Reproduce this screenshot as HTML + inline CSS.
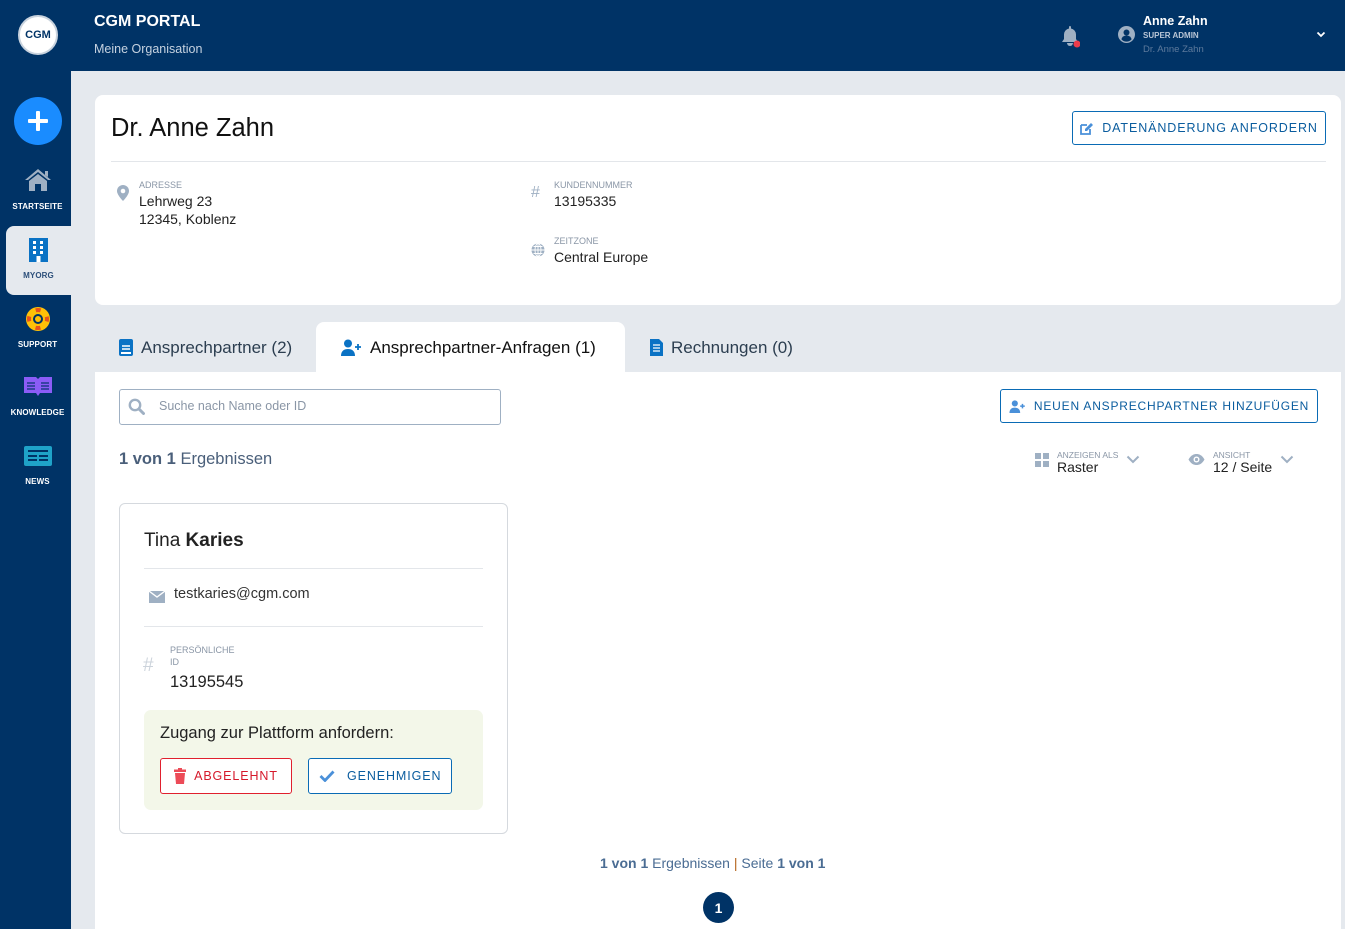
<!DOCTYPE html>
<html><head><meta charset="utf-8"><style>
*{box-sizing:border-box;margin:0;padding:0}
body{width:1345px;height:929px;overflow:hidden;background:#e5e9ee;font-family:"Liberation Sans",sans-serif;position:relative;color:#222}
.hdr{position:absolute;left:0;top:0;width:1345px;height:71px;background:#003366}
.side{position:absolute;left:0;top:0;width:71px;height:929px;background:#003366}
.abs{position:absolute;white-space:nowrap}
.navlbl{position:absolute;width:71px;text-align:center;font-size:8px;font-weight:bold;color:#fff;letter-spacing:.1px}
.card{position:absolute;left:95px;top:95px;width:1246px;height:210px;background:#fff;border-radius:8px}
.lbl{font-size:9px;color:#8a96a6;text-transform:uppercase}
.val{font-size:14px;color:#222;line-height:18px}
.btn{position:absolute;white-space:nowrap;border:1px solid #0a6bb5;border-radius:3px;color:#0a5c9e;font-size:12.5px;letter-spacing:.9px;display:flex;align-items:center;justify-content:center;gap:8px;background:#fff}
.tab{position:absolute;top:322px;height:51px;font-size:17px;display:flex;align-items:center;gap:8px;color:#2c3e50;white-space:nowrap}
</style></head><body>
<div class="hdr"></div>
<div class="side"></div>
<div class="abs" style="left:18px;top:15px;width:40px;height:40px;border-radius:50%;background:#fff;border:2px solid #c9d3de;display:flex;align-items:center;justify-content:center;font-size:11px;font-weight:bold;color:#003366">CGM</div>
<div class="abs" style="left:94px;top:13px;color:#fff;font-size:16px;font-weight:bold">CGM PORTAL</div>
<div class="abs" style="left:94px;top:42px;color:#c5d2e0;font-size:12.5px">Meine Organisation</div>
<svg class="abs" style="left:1060px;top:26px" width="20" height="22" viewBox="0 0 20 22"><path d="M9 1a1 1 0 0 1 2 0v1.5a6 6 0 0 1 5 6V13l2 3H2l2-3V8.5a6 6 0 0 1 5-6z" fill="#9fb0c3"/><path d="M7 17h6a3 3 0 0 1-6 0z" fill="#9fb0c3"/><circle cx="17" cy="18" r="3.5" fill="#ec3b4b"/></svg>
<svg class="abs" style="left:1118px;top:26px" width="17" height="17" viewBox="0 0 17 17"><circle cx="8.5" cy="8.5" r="8.5" fill="#9fb0c3"/><circle cx="8.5" cy="6.5" r="3" fill="#003366"/><path d="M3.5 13.5a5 4 0 0 1 10 0a7 7 0 0 1-10 0z" fill="#003366"/></svg>
<div class="abs" style="left:1143px;top:14px;color:#fff;font-size:12.5px;font-weight:bold">Anne Zahn</div>
<div class="abs" style="left:1143px;top:31px;color:#b9c6d6;font-size:8px;font-weight:bold">SUPER ADMIN</div>
<div class="abs" style="left:1143px;top:44px;color:#5d7a9c;font-size:9.5px">Dr. Anne Zahn</div>
<svg class="abs" style="left:1316px;top:31px" width="10" height="7" viewBox="0 0 10 7"><path d="M1.5 1.5l3.5 3.5 3.5-3.5" stroke="#fff" stroke-width="1.8" fill="none"/></svg>
<div class="abs" style="left:14px;top:97px;width:48px;height:48px;border-radius:50%;background:#1a8cff"></div>
<div class="abs" style="left:28px;top:119px;width:20px;height:4px;background:#fff;border-radius:1px"></div>
<div class="abs" style="left:36px;top:111px;width:4px;height:20px;background:#fff;border-radius:1px"></div>
<svg class="abs" style="left:24px;top:168px" width="28" height="24" viewBox="0 0 28 24"><path d="M14 1L1 12h3l10-8 10 8h3z" fill="#9fb0c3"/><path d="M21 3h3v6l-3-2z" fill="#9fb0c3"/><path d="M5 13l9-7 9 7v10h-6v-7h-6v7H5z" fill="#9fb0c3"/></svg>
<div class="navlbl" style="left:2px;top:202px">STARTSEITE</div>
<div class="abs" style="left:6px;top:226px;width:65px;height:69px;background:#e5e9ee;border-radius:8px 0 0 8px"></div>
<svg class="abs" style="left:28px;top:238px" width="21" height="24" viewBox="0 0 21 24"><rect x="1" y="0" width="19" height="24" fill="#0a72c4"/><g fill="#fff"><rect x="5" y="3" width="3" height="3"/><rect x="12" y="3" width="3" height="3"/><rect x="5" y="8" width="3" height="3"/><rect x="12" y="8" width="3" height="3"/><rect x="5" y="13" width="3" height="3"/><rect x="12" y="13" width="3" height="3"/><rect x="8.5" y="18" width="4" height="6"/></g></svg>
<div class="navlbl" style="left:3px;top:271px;color:#2c4f7a">MYORG</div>
<svg class="abs" style="left:26px;top:307px" width="24" height="24" viewBox="0 0 24 24"><circle cx="12" cy="12" r="12" fill="#ffc107"/><circle cx="12" cy="12" r="5" fill="#003366"/><circle cx="12" cy="12" r="9" fill="none" stroke="#e8531c" stroke-width="4" stroke-dasharray="5 9.1" stroke-dashoffset="2.5"/><circle cx="12" cy="12" r="3" fill="#ffc107"/></svg>
<div class="navlbl" style="left:2px;top:340px">SUPPORT</div>
<svg class="abs" style="left:24px;top:376px" width="28" height="22" viewBox="0 0 28 22"><path d="M0 1h12l2 2 2-2h12v16H16l-2 3-2-3H0z" fill="#8b5cf6"/><g stroke="#1e3a8a" stroke-width="1.6"><path d="M3 7h8M3 10h8M3 13h8M17 7h8M17 10h8M17 13h8"/></g></svg>
<div class="navlbl" style="left:2px;top:408px">KNOWLEDGE</div>
<svg class="abs" style="left:24px;top:446px" width="28" height="20" viewBox="0 0 28 20"><rect width="28" height="20" rx="2" fill="#1fa3c8"/><g fill="#003366"><rect x="4" y="4" width="20" height="2"/><rect x="4" y="9" width="9" height="2"/><rect x="15" y="9" width="9" height="2"/><rect x="4" y="13" width="9" height="2"/><rect x="15" y="13" width="9" height="2"/></g></svg>
<div class="navlbl" style="left:2px;top:477px">NEWS</div>
<div class="card"></div>
<div class="abs" style="left:111px;top:114px;font-size:25.5px;color:#111">Dr. Anne Zahn</div>
<div class="btn" style="left:1072px;top:111px;width:254px;height:34px"><svg width="14" height="13" viewBox="0 0 14 13"><path d="M1 3h6M1 3v9h9V7" stroke="#4a90d9" stroke-width="1.8" fill="none"/><path d="M11 1l2 2-6 6H5V7z" fill="#4a90d9"/></svg>DATENÄNDERUNG ANFORDERN</div>
<div class="abs" style="left:111px;top:161px;width:1215px;height:1px;background:#e3e6ea"></div>
<svg class="abs" style="left:117px;top:185px" width="12" height="16" viewBox="0 0 12 16"><path d="M6 0a6 6 0 0 1 6 6c0 4-6 10-6 10S0 10 0 6a6 6 0 0 1 6-6z" fill="#9fb0c3"/><circle cx="6" cy="6" r="2.3" fill="#fff"/></svg>
<div class="abs lbl" style="left:139px;top:180px">Adresse</div>
<div class="abs val" style="left:139px;top:192px">Lehrweg 23<br>12345, Koblenz</div>
<div class="abs" style="left:531px;top:184px;font-size:16px;color:#9fb0c3">#</div>
<div class="abs lbl" style="left:554px;top:180px">Kundennummer</div>
<div class="abs val" style="left:554px;top:192px">13195335</div>
<svg class="abs" style="left:531px;top:243px" width="14" height="14" viewBox="0 0 14 14"><circle cx="7" cy="7" r="6.5" fill="#9fb0c3"/><path d="M0.5 7h13M7 0.5v13M2.5 3.5h9M2.5 10.5h9" stroke="#fff" stroke-width=".9"/><ellipse cx="7" cy="7" rx="3" ry="6.5" fill="none" stroke="#fff" stroke-width=".9"/></svg>
<div class="abs lbl" style="left:554px;top:236px">Zeitzone</div>
<div class="abs val" style="left:554px;top:248px">Central Europe</div>
<div class="abs" style="left:316px;top:322px;width:309px;height:60px;background:#fff;border-radius:8px 8px 0 0"></div>
<div class="tab" style="left:119px"><svg width="14" height="17" viewBox="0 0 14 17"><rect width="14" height="17" rx="2" fill="#0a72c4"/><path d="M3 7h8M3 10h8" stroke="#fff" stroke-width="1.4"/><rect x="2" y="13" width="10" height="2" fill="#fff"/></svg>Ansprechpartner (2)</div>
<div class="tab" style="left:341px;color:#111"><svg width="21" height="17" viewBox="0 0 21 17"><circle cx="7" cy="4.5" r="4" fill="#0a72c4"/><path d="M0 17c0-5 3-7 7-7s7 2 7 7z" fill="#0a72c4"/><path d="M14 8h6M17 5v6" stroke="#0a72c4" stroke-width="1.8"/></svg>Ansprechpartner-Anfragen (1)</div>
<div class="tab" style="left:650px"><svg width="13" height="17" viewBox="0 0 13 17"><path d="M0 0h9l4 4v13H0z" fill="#0a72c4"/><path d="M3 6h7M3 9h7M3 12h7" stroke="#fff" stroke-width="1.3"/></svg>Rechnungen (0)</div>
<div class="abs" style="left:95px;top:372px;width:1246px;height:557px;background:#fff"></div>
<div class="abs" style="left:119px;top:389px;width:382px;height:36px;border:1px solid #9fb0c3;border-radius:3px"></div>
<svg class="abs" style="left:128px;top:398px" width="17" height="17" viewBox="0 0 17 17"><circle cx="7" cy="7" r="5.2" stroke="#9fb0c3" stroke-width="2.4" fill="none"/><path d="M11 11l4.5 4.5" stroke="#9fb0c3" stroke-width="3" stroke-linecap="round"/></svg>
<div class="abs" style="left:159px;top:399px;font-size:12.5px;color:#8a96a6">Suche nach Name oder ID</div>
<div class="btn" style="left:1000px;top:389px;width:318px;height:34px;font-size:12px;letter-spacing:.8px"><svg width="17" height="13" viewBox="0 0 21 17"><circle cx="7" cy="4.5" r="4" fill="#4a90d9"/><path d="M0 17c0-5 3-7 7-7s7 2 7 7z" fill="#4a90d9"/><path d="M14 8h6M17 5v6" stroke="#4a90d9" stroke-width="2"/></svg>NEUEN ANSPRECHPARTNER HINZUFÜGEN</div>
<div class="abs" style="left:119px;top:450px;font-size:16.5px;color:#4a5f7a"><b>1 von 1</b> Ergebnissen</div>
<svg class="abs" style="left:1035px;top:453px" width="14" height="14" viewBox="0 0 14 14"><g fill="#9fb0c3"><rect width="6" height="6"/><rect x="8" width="6" height="6"/><rect y="8" width="6" height="6"/><rect x="8" y="8" width="6" height="6"/></g></svg>
<div class="abs lbl" style="left:1057px;top:450px;font-size:8.5px">Anzeigen als</div>
<div class="abs" style="left:1057px;top:459px;font-size:14px">Raster</div>
<svg class="abs" style="left:1126px;top:455px" width="14" height="9" viewBox="0 0 14 9"><path d="M1.5 1.5l5.5 5.5 5.5-5.5" stroke="#9fb0c3" stroke-width="2" fill="none"/></svg>
<svg class="abs" style="left:1188px;top:454px" width="17" height="11" viewBox="0 0 17 11"><path d="M0.5 5.5C3 1 6 0 8.5 0S14 1 16.5 5.5C14 10 11 11 8.5 11S3 10 .5 5.5z" fill="#9fb0c3"/><circle cx="8.5" cy="5.5" r="3" fill="#fff"/><circle cx="8.5" cy="5.5" r="1.6" fill="#9fb0c3"/></svg>
<div class="abs lbl" style="left:1213px;top:450px;font-size:8.5px">Ansicht</div>
<div class="abs" style="left:1213px;top:459px;font-size:14px">12 / Seite</div>
<svg class="abs" style="left:1280px;top:455px" width="14" height="9" viewBox="0 0 14 9"><path d="M1.5 1.5l5.5 5.5 5.5-5.5" stroke="#9fb0c3" stroke-width="2" fill="none"/></svg>
<div class="abs" style="left:119px;top:503px;width:389px;height:331px;border:1px solid #d5d9de;border-radius:6px"></div>
<div class="abs" style="left:144px;top:530px;font-size:19px;color:#222">Tina <b>Karies</b></div>
<div class="abs" style="left:144px;top:568px;width:339px;height:1px;background:#e3e6ea"></div>
<svg class="abs" style="left:149px;top:590px" width="16" height="13" viewBox="0 0 16 13"><rect y="1" width="16" height="12" fill="#9fb0c3"/><path d="M0 1l8 6 8-6" stroke="#fff" stroke-width="1.3" fill="none"/></svg>
<div class="abs" style="left:174px;top:586px;font-size:14.5px;color:#333">testkaries@cgm.com</div>
<div class="abs" style="left:144px;top:626px;width:339px;height:1px;background:#e3e6ea"></div>
<div class="abs lbl" style="left:170px;top:644px;line-height:12px">Persönliche<br>ID</div>
<div class="abs" style="left:143px;top:655px;font-size:19px;color:#ccd3db">#</div>
<div class="abs" style="left:170px;top:673px;font-size:16.5px;color:#222">13195545</div>
<div class="abs" style="left:144px;top:710px;width:339px;height:100px;background:#f3f7e9;border-radius:7px"></div>
<div class="abs" style="left:160px;top:724px;font-size:16.5px;color:#222">Zugang zur Plattform anfordern:</div>
<div class="btn" style="left:160px;top:758px;width:132px;height:36px;border-color:#e0202e;color:#d6192b"><svg width="12" height="16" viewBox="0 0 12 16"><rect x="0" y="1.5" width="12" height="2.5" fill="#ec4b57"/><rect x="4" y="0" width="4" height="2" fill="#ec4b57"/><path d="M1 5h10l-1 11H2z" fill="#ec4b57"/></svg>ABGELEHNT</div>
<div class="btn" style="left:308px;top:758px;width:144px;height:36px"><svg width="16" height="12" viewBox="0 0 16 12"><path d="M1.5 6l4.5 4.5L14.5 1.5" stroke="#4a90d9" stroke-width="2.8" fill="none"/></svg>&nbsp;GENEHMIGEN</div>
<div class="abs" style="left:600px;top:855px;font-size:14px;color:#4a6c93"><b>1 von 1</b> Ergebnissen <span style="color:#b5651d">|</span> Seite <b>1 von 1</b></div>
<div class="abs" style="left:703px;top:892px;width:31px;height:31px;border-radius:50%;background:#003366;color:#fff;font-weight:bold;font-size:14px;display:flex;align-items:center;justify-content:center">1</div>
</body></html>
